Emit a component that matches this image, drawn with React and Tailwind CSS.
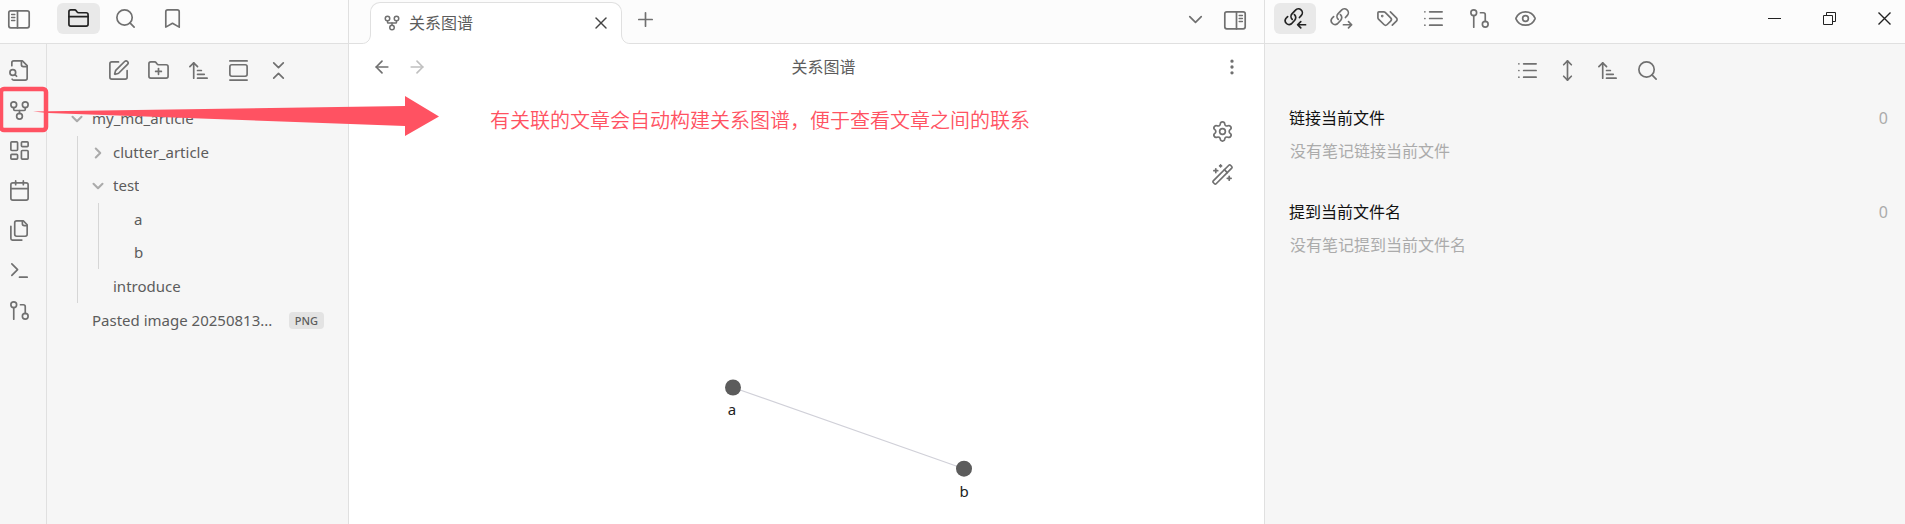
import {
  ArrowLeft, ArrowRight, ArrowUpNarrowWide, Bookmark, Calendar, ChevronDown, ChevronRight,
  ChevronsDownUp, EllipsisVertical, Eye, FolderClosed, FolderPlus, GalleryVertical, GitFork,
  GitPullRequest, LayoutDashboard, List, MoveVertical, Plus, Search, Settings, SquarePen,
  Terminal, WandSparkles, X,
} from "lucide-react";

const ICON = "size-[23px] shrink-0";

function Drawn({ children }) {
  return (
    <svg viewBox="0 0 24 24" className={ICON} fill="none" stroke="currentColor" strokeWidth="1.75" strokeLinecap="round" strokeLinejoin="round">
      {children}
    </svg>
  );
}

function PanelIcon({ flip }) {
  return (
    <svg viewBox="0 0 24 20" className={`h-5 w-6 text-[#707070] ${flip ? "-scale-x-100" : ""}`} fill="none" stroke="currentColor" strokeWidth="1.7" strokeLinecap="round">
      <rect x="1.8" y="1.8" width="20.4" height="17" rx="2" />
      <path d="M10.500 1.800v17" />
      <path d="M4.600 5.500h3.200M4.600 8.500h3.200M4.600 11.500h3.200" strokeWidth="1.4" />
    </svg>
  );
}

function LinkArrow({ incoming }) {
  return (
    <Drawn>
      <path d="M8.6 12.9a4.1 4.1 0 0 1-.3-5.7l3.7-3.9a4.1 4.1 0 0 1 6.1 5.500l-2 2.200" />
      <path d="M10.900 8a4.1 4.1 0 0 1 .3 5.800l-3.400 3.700A4.100 4.100 0 0 1 1.900 12l1.900-2" />
      {incoming
        ? <path d="M22.500 18.500h-8M17.500 15.200l-3.300 3.300 3.300 3.300" />
        : <path d="M14 18.500h8.500M19.300 15.200l3.300 3.300-3.300 3.300" />}
    </Drawn>
  );
}

const LinkIn = () => <LinkArrow incoming />;
const LinkOut = () => <LinkArrow />;

const DocSearch = () => (
  <Drawn>
    <path d="M14 2v4a2 2 0 0 0 2 2h4" />
    <path d="M4.268 21a2 2 0 0 0 1.727 1H18a2 2 0 0 0 2-2V7l-5-5H6a2 2 0 0 0-2 2v3" />
    <path d="m9 18-1.500-1.500" />
    <circle cx="5" cy="14" r="3" />
  </Drawn>
);

const DocStack = () => (
  <Drawn>
    <path d="M20 7h-3a2 2 0 0 1-2-2V2" />
    <path d="M9 18a2 2 0 0 1-2-2V4a2 2 0 0 1 2-2h7l4 4v10a2 2 0 0 1-2 2Z" />
    <path d="M3 7.600v12.800A1.600 1.600 0 0 0 4.600 22h9.800" />
  </Drawn>
);

const TagPair = () => (
  <Drawn>
    <path d="m15 5 6.300 6.300a2.400 2.400 0 0 1 0 3.400L17 19" />
    <path d="M9.586 5.586A2 2 0 0 0 8.172 5H3a1 1 0 0 0-1 1v5.172a2 2 0 0 0 .586 1.414L8.290 18.290a2.426 2.426 0 0 0 3.420 0l3.580-3.580a2.426 2.426 0 0 0 0-3.420z" />
    <circle cx="6.500" cy="9.500" r=".5" fill="currentColor" />
  </Drawn>
);

function IconButton({ icon: Icon, label, className = "", active }) {
  return (
    <button type="button" aria-label={label} className={`flex shrink-0 items-center justify-center rounded-md ${active ? "bg-[#e9e9e9] text-[#222]" : "text-[#707070]"} ${className}`}>
      <Icon className={ICON} strokeWidth={1.75} />
    </button>
  );
}

const ribbon = [
  [DocSearch, "Quick switcher"], [GitFork, "Graph view"], [LayoutDashboard, "Canvas"],
  [Calendar, "Daily note"], [DocStack, "Templates"], [Terminal, "Command palette"], [GitPullRequest, "Git"],
];
const fileTools = [
  [SquarePen, "New note"], [FolderPlus, "New folder"], [ArrowUpNarrowWide, "Sort"],
  [GalleryVertical, "Reveal"], [ChevronsDownUp, "Collapse all"],
];
const linkTabs = [
  [LinkOut, "Outgoing links"], [TagPair, "Tags"], [List, "Outline"], [GitPullRequest, "Git"], [Eye, "Preview"],
];
const linkTools = [
  [List, "Collapse results"], [MoveVertical, "Show context"], [ArrowUpNarrowWide, "Sort"], [Search, "Search"],
];

function Row({ name, icon: Icon, children }) {
  return (
    <button type="button" className="flex h-[33px] w-full items-center text-left">
      <span className="flex w-[30px] shrink-0 justify-center text-[#ababab]">
        {Icon && <Icon className="size-[18px]" strokeWidth={2.75} />}
      </span>
      <span className="min-w-0 truncate">{name}</span>
      {children}
    </button>
  );
}

function Group({ children }) {
  return <div className="my-px ml-[15px] border-l border-[#d6d6d6] pl-[5px]">{children}</div>;
}

function LinkSection({ title, empty }) {
  return (
    <section>
      <h2 className="flex h-8 items-center justify-between pr-[17px] pl-6 text-[#111]">
        {title}
        <span className="text-[#ababab]">0</span>
      </h2>
      <p className="flex h-[34px] items-center pl-[25px] text-[#ababab]">{empty}</p>
    </section>
  );
}

function LeftSide() {
  return (
    <aside className="flex w-[349px] shrink-0 flex-col border-r border-[#e0e0e0]">
      <header className="flex h-11 shrink-0 items-center border-b border-[#e0e0e0] bg-[#fcfcfc] pb-1.5 pl-[7px]">
        <button type="button" aria-label="Toggle left sidebar"><PanelIcon /></button>
        <div className="ml-[26px] flex gap-1">
          <IconButton icon={FolderClosed} label="Files" active className="h-[31px] w-[43px]" />
          <IconButton icon={Search} label="Search" className="h-[31px] w-[43px]" />
          <IconButton icon={Bookmark} label="Bookmarks" className="h-[31px] w-[43px]" />
        </div>
      </header>
      <div className="flex min-h-0 flex-1">
        <nav className="flex w-[47px] shrink-0 flex-col gap-2 border-r border-[#e0e0e0] pt-2.5 pl-[3px]">
          {ribbon.map(([icon, label]) => (
            <IconButton key={label} icon={icon} label={label} className="size-8" />
          ))}
        </nav>
        <div className="min-w-0 flex-1">
          <div className="flex justify-center gap-2 pt-2.5 pl-0.5">
            {fileTools.map(([icon, label]) => (
              <IconButton key={label} icon={icon} label={label} className="size-8" />
            ))}
          </div>
          <div className="pt-4 pr-6 pl-[15px] text-[15px]">
            <Row name="my_md_article" icon={ChevronDown} />
            <Group>
              <Row name="clutter_article" icon={ChevronRight} />
              <Row name="test" icon={ChevronDown} />
              <Group>
                <Row name="a" />
                <Row name="b" />
              </Group>
              <Row name="introduce" />
            </Group>
            <Row name="Pasted image 20250813...">
              <span className="ml-auto rounded bg-[#e3e3e3] px-1.5 text-[11px] leading-[17px] font-medium">PNG</span>
            </Row>
          </div>
        </div>
      </div>
    </aside>
  );
}

function TabCorner({ flip }) {
  return (
    <svg className={`relative mt-[34px] h-2.5 w-[9px] shrink-0 ${flip ? "-ml-px -scale-x-100" : "-mr-px"}`} viewBox="0 0 9 10" fill="none">
      <path d="M0 9.500c5 0 8.500-3.500 8.500-9.500H9v10H0z" fill="#fff" />
      <path d="M0 9.500c5 0 8.500-3.500 8.500-9.500" stroke="#e0e0e0" />
    </svg>
  );
}

function Main() {
  return (
    <main className="flex min-w-0 flex-1 flex-col bg-white">
      <header className="flex h-11 shrink-0 bg-[#fcfcfc]">
        <div className="w-[13px] border-b border-[#e0e0e0]" />
        <TabCorner />
        <div className="mt-0.5 flex w-[252px] items-center rounded-t-[10px] border border-b-0 border-[#e0e0e0] bg-white pr-2.5 pb-0.5 pl-3">
          <GitFork className="size-[18px] text-[#707070]" strokeWidth={2} />
          <span className="ml-2">关系图谱</span>
          <button type="button" aria-label="Close tab" className="ml-auto text-[#444]"><X className="size-5" strokeWidth={1.75} /></button>
        </div>
        <TabCorner flip />
        <div className="flex flex-1 items-center border-b border-[#e0e0e0] pr-[17px] pb-1">
          <IconButton icon={Plus} label="New tab" className="ml-1" />
          <IconButton icon={ChevronDown} label="Tab list" className="mr-4 ml-auto" />
          <button type="button" aria-label="Toggle right sidebar"><PanelIcon flip /></button>
        </div>
      </header>
      <div className="flex h-[46px] items-center pr-[22px] pl-[23px]">
        <div className="flex w-[129px] gap-[15px]">
          <button type="button" aria-label="Back" className="text-[#707070]"><ArrowLeft className="size-5" strokeWidth={2} /></button>
          <button type="button" aria-label="Forward" className="text-[#c0c0c0]"><ArrowRight className="size-5" strokeWidth={2} /></button>
        </div>
        <h1 className="flex-1 text-center">关系图谱</h1>
        <button type="button" aria-label="More options" className="flex w-24 justify-end text-[#707070]"><EllipsisVertical className="size-5" strokeWidth={2} /></button>
      </div>
      <div className="relative flex-1">
        <p className="pt-4 pl-[141px] text-xl leading-[30px] font-[350] text-[#ff5262]">
          有关联的文章会自动构建关系图谱，便于查看文章之间的联系
        </p>
        <div className="absolute top-[25px] right-[26px] flex flex-col gap-[11px]">
          <IconButton icon={Settings} label="Graph settings" className="size-8" />
          <IconButton icon={WandSparkles} label="Animate" className="size-8" />
        </div>
        <svg className="pointer-events-none absolute top-0 left-0 h-[433px] w-full" fill="none" role="img" aria-label="Graph">
          <path d="M384 297.500 615 378.700" stroke="#d0d0d8" strokeWidth="1.2" />
          <circle cx="384" cy="297.500" r="8" fill="#5c5c5c" />
          <circle cx="615" cy="378.700" r="8" fill="#5c5c5c" />
          <g fill="#222" fontSize="15" textAnchor="middle">
            <text x="383" y="325">a</text>
            <text x="615" y="407">b</text>
          </g>
        </svg>
      </div>
    </main>
  );
}

function RightSide() {
  return (
    <aside className="flex w-[641px] shrink-0 flex-col border-l border-[#e0e0e0]">
      <header className="flex h-11 shrink-0 items-center border-b border-[#e0e0e0] bg-[#fcfcfc] pb-1.5 pl-[9px]">
        <div className="flex gap-1">
          <IconButton icon={LinkIn} label="Backlinks" active className="h-[31px] w-[42px]" />
          {linkTabs.map(([icon, label]) => (
            <IconButton key={label} icon={icon} label={label} className="h-[31px] w-[42px]" />
          ))}
        </div>
        <div className="ml-auto flex text-[#222]">
          <button type="button" aria-label="Minimize" className="flex h-8 w-[55px] items-center justify-center">
            <svg className="size-[13px]" viewBox="0 0 13 13" stroke="currentColor"><path d="M0 6.500h13" /></svg>
          </button>
          <button type="button" aria-label="Restore" className="flex h-8 w-[55px] items-center justify-center">
            <svg className="size-[13px]" viewBox="0 0 13 13" fill="none" stroke="currentColor">
              <path d="M.5 3.500h9v9h-9zM3.500 3.500v-3h9v9h-3" />
            </svg>
          </button>
          <button type="button" aria-label="Close" className="ml-1.5 flex h-8 w-[42px] items-center justify-center">
            <svg className="size-[13px]" viewBox="0 0 13 13" stroke="currentColor" strokeWidth="1.4"><path d="m.5.5 12 12m0-12-12 12" /></svg>
          </button>
        </div>
      </header>
      <div className="flex justify-center gap-2 pt-2.5 pl-1">
        {linkTools.map(([icon, label]) => (
          <IconButton key={label} icon={icon} label={label} className="size-8" />
        ))}
      </div>
      <div className="flex flex-col gap-7 pt-4">
        <LinkSection title="链接当前文件" empty="没有笔记链接当前文件" />
        <LinkSection title="提到当前文件名" empty="没有笔记提到当前文件名" />
      </div>
    </aside>
  );
}

export default function App() {
  return (
    <div className="relative flex min-h-screen bg-[#f6f6f6] font-['Noto_Sans','Noto_Sans_CJK_SC',sans-serif] text-base text-[#5c5c5c]">
      <LeftSide />
      <Main />
      <RightSide />
      <svg className="pointer-events-none absolute top-[86px] left-0 z-20 h-[50px] w-[440px]" fill="none" aria-hidden="true">
        <rect x="1" y="3" width="45" height="41" rx="3" stroke="#ff5262" strokeWidth="4.500" />
        <path d="M33 25.500 405 20V10l34 20.500L405 50V40L48 27z" fill="#ff5262" />
      </svg>
    </div>
  );
}
